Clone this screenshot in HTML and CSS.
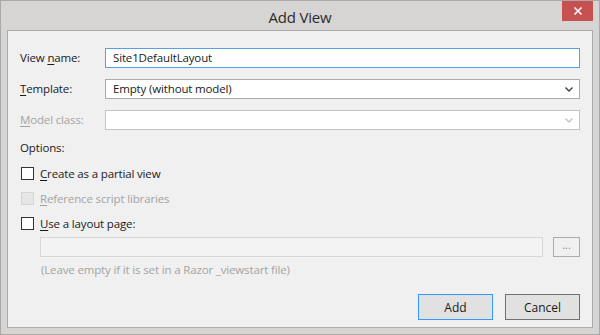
FILE: index.html
```html
<!DOCTYPE html>
<html lang="en">
<head>
    <meta charset="UTF-8">
    <title>Add View</title>
    <link rel="stylesheet" href="styles.css">
</head>
<body>
    <div class="window">
        <header class="title-bar">
            <span class="title">Add View</span>
            <button class="close-btn" aria-label="Close">
                <svg width="10" height="10" viewBox="0 0 10 10"><path d="M1.5 1.5 L8.5 8.5 M8.5 1.5 L1.5 8.5" stroke="#fff" stroke-width="1.6"/></svg>
            </button>
        </header>

        <main class="client">
            <div class="form-grid">
                <label class="label">View <u>n</u>ame:</label>
                <div class="field field-focus">Site1DefaultLayout</div>

                <label class="label"><u>T</u>emplate:</label>
                <div class="field select">
                    <span>Empty (without model)</span>
                    <svg class="chevron" width="8" height="5" viewBox="0 0 8 5"><path d="M0.5 0.5 L4 4 L7.5 0.5" fill="none" stroke="#404040" stroke-width="1.4"/></svg>
                </div>

                <label class="label disabled"><u>M</u>odel class:</label>
                <div class="field select select-disabled">
                    <span></span>
                    <svg class="chevron" width="8" height="5" viewBox="0 0 8 5"><path d="M0.5 0.5 L4 4 L7.5 0.5" fill="none" stroke="#c4c4c4" stroke-width="1.4"/></svg>
                </div>
            </div>

            <div class="options-label">Options:</div>

            <div class="check-row check-first">
                <span class="checkbox"></span>
                <span><u>C</u>reate as a partial view</span>
            </div>
            <div class="check-row disabled">
                <span class="checkbox checkbox-disabled"></span>
                <span><u>R</u>eference script libraries</span>
            </div>
            <div class="check-row">
                <span class="checkbox"></span>
                <span><u>U</u>se a layout page:</span>
            </div>

            <div class="layout-row">
                <div class="field field-disabled"></div>
                <button class="browse-btn">...</button>
            </div>
            <div class="hint">(Leave empty if it is set in a Razor _viewstart file)</div>

            <div class="actions">
                <button class="btn btn-default">Add</button>
                <button class="btn">Cancel</button>
            </div>
        </main>
    </div>
</body>
</html>
```

FILE: styles.css
```css
/* Global styles */
:root {
    --frame-color: #d6d5d4;
    --panel-color: #f0f0f0;
    --text-color: #1a1a1a;
    --disabled-text: #a3a3a3;
    --accent: #5a9ee6;
}

* {
    box-sizing: border-box;
}

body {
    margin: 0;
    font-family: 'Open Sans', 'Noto Sans', sans-serif;
    font-size: 11.5px;
    letter-spacing: -0.15px;
    color: var(--text-color);
}

u {
    text-decoration-thickness: 1px;
    text-underline-offset: 2px;
}

/* Window frame */
.window {
    width: 600px;
    height: 335px;
    background: var(--frame-color);
    border: 1px solid #a9a9a9;
    display: flex;
    flex-direction: column;
}

.title-bar {
    height: 29px;
    position: relative;
    display: flex;
    justify-content: center;
    align-items: center;
}

.title {
    font-size: 15px;
    color: #2b2b2b;
    letter-spacing: -0.2px;
    padding-top: 2px;
}

.close-btn {
    position: absolute;
    top: 0;
    right: 6px;
    width: 31px;
    height: 20px;
    border: none;
    padding: 0;
    background: #c75050;
    display: flex;
    align-items: center;
    justify-content: center;
}

/* Client area */
.client {
    flex: 1;
    margin: 0 6px 6px;
    background: var(--panel-color);
    border: 1px solid #acacac;
    padding: 17px 12px 0 12px;
    display: flex;
    flex-direction: column;
}

.form-grid {
    display: grid;
    grid-template-columns: 85px 1fr;
    row-gap: 11px;
    align-items: center;
}

.label {
    line-height: 20px;
}

.disabled {
    color: var(--disabled-text);
}

.field {
    height: 20px;
    background: #fff;
    border: 1px solid #ababab;
    padding: 0 7px;
    line-height: 18px;
}

.field-focus {
    border-color: var(--accent);
}

.select {
    display: flex;
    justify-content: space-between;
    align-items: center;
    padding-right: 6px;
}

.select-disabled {
    border-color: #c4c4c4;
}

.chevron {
    display: block;
}

.options-label {
    margin-top: 9px;
    line-height: 18px;
}

/* Checkboxes */
.check-row {
    display: flex;
    align-items: center;
    gap: 6px;
    height: 25px;
    margin-left: 1px;
}

.check-first {
    margin-top: 4px;
}

.checkbox {
    width: 13px;
    height: 13px;
    border: 1px solid #333;
    background: #fff;
}

.checkbox-disabled {
    border-color: #d6d6d6;
    background: #e6e6e6;
}

.layout-row {
    display: flex;
    gap: 10px;
    margin: 1px 0 0 20px;
}

.field-disabled {
    flex: 1;
    background: #f3f3f3;
    border-color: #d7d7d7;
}

.browse-btn {
    width: 27px;
    height: 20px;
    padding: 0 0 4px;
    border: 1px solid #adadad;
    background: #f0f0f0;
    color: #8a8a8a;
    font-family: inherit;
    font-size: 11px;
    line-height: 12px;
}

.hint {
    margin: 3px 0 0 21px;
    line-height: 20px;
    color: var(--disabled-text);
}

/* Buttons */
.actions {
    display: flex;
    justify-content: flex-end;
    gap: 12px;
    margin-top: 14px;
}

.btn {
    width: 75px;
    height: 26px;
    background: #e1e1e1;
    border: 1px solid #707070;
    font-family: inherit;
    font-size: 12px;
    color: var(--text-color);
}

.btn-default {
    border-color: #3399ff;
}
```
